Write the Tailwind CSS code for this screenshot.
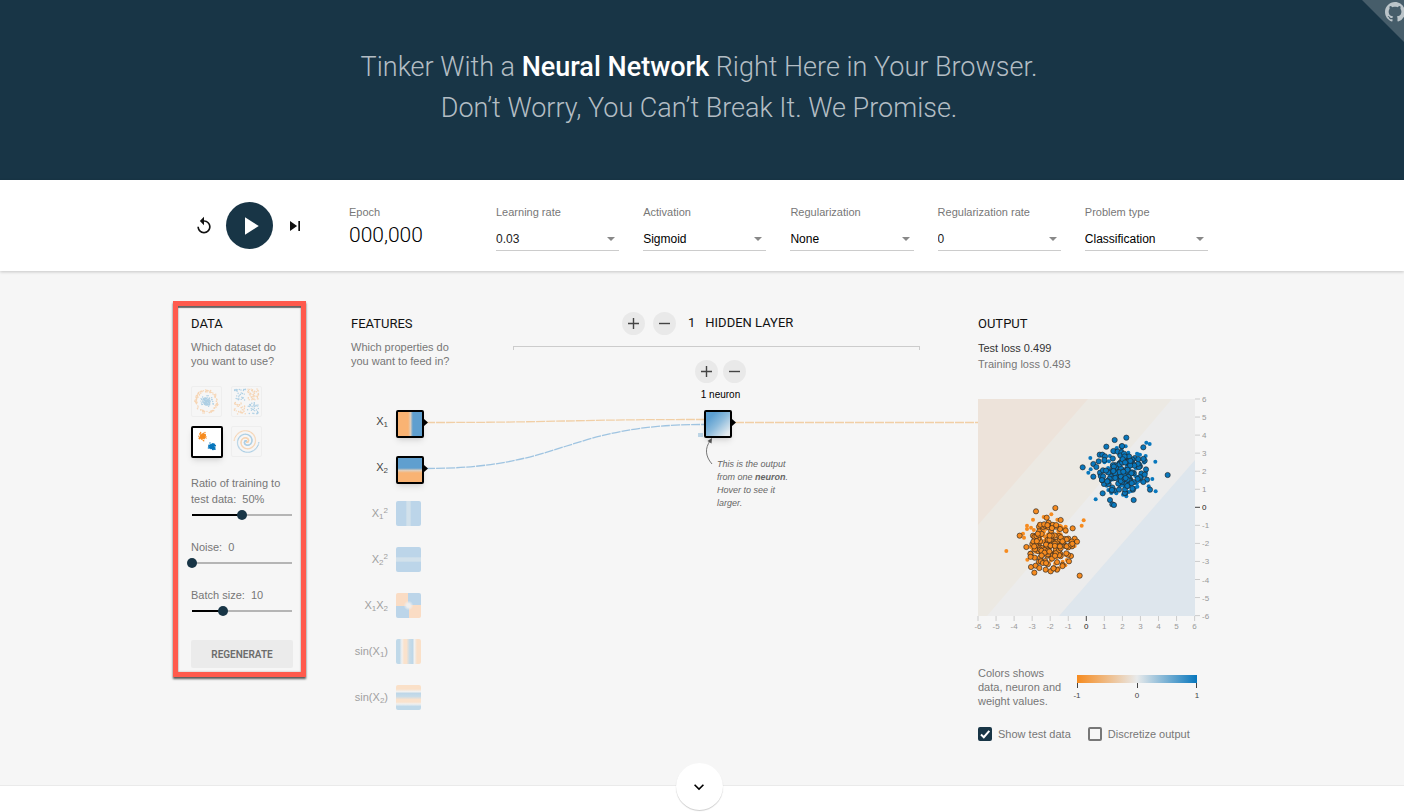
<!DOCTYPE html>
<html lang="en">
<head>
<meta charset="utf-8">
<meta name="viewport" content="width=device-width, initial-scale=1">
<title>A Neural Network Playground</title>
<script src="https://cdn.jsdelivr.net/npm/@tailwindcss/browser@4"></script>
</head>
<body class="flex min-h-screen flex-col overflow-x-hidden bg-white font-['Liberation_Sans',Arial,sans-serif] text-[11px] text-[#777]">

<header class="relative bg-[#183546] pt-[47px] pr-1.5 pb-[51px] text-center">
  <h1 class="font-[Roboto,sans-serif] text-[27px] leading-[41px] font-light text-[#b3bdc4]">Tinker With a <b class="font-medium text-white">Neural Network</b> Right Here in Your Browser.<br>Don’t Worry, You Can’t Break It. We Promise.</h1>
  <a href="#" aria-label="Source on GitHub" class="absolute top-0 right-0 block">
    <svg class="block" width="42" height="42" viewBox="0 0 42 42">
      <path d="M0 0H42V42Z" fill="#465d6a"/>
      <path transform="translate(23 2) scale(1.25)" fill="#bcc5ca" d="M8 0C3.58 0 0 3.58 0 8c0 3.54 2.29 6.53 5.47 7.59.4.07.55-.17.55-.38 0-.19-.01-.82-.01-1.49-2.01.37-2.53-.49-2.69-.94-.09-.23-.48-.94-.82-1.13-.28-.15-.68-.52-.01-.53.63-.01 1.08.58 1.23.82.72 1.21 1.87.87 2.33.66.07-.52.28-.87.51-1.07-1.78-.2-3.64-.89-3.64-3.95 0-.87.31-1.59.82-2.15-.08-.2-.36-1.02.08-2.12 0 0 .67-.21 2.2.82.64-.18 1.32-.27 2-.27.68 0 1.36.09 2 .27 1.53-1.04 2.2-.82 2.2-.82.44 1.1.16 1.92.08 2.12.51.56.82 1.27.82 2.15 0 3.07-1.87 3.75-3.65 3.95.29.25.54.73.54 1.48 0 1.07-.01 1.93-.01 2.2 0 .21.15.46.55.38A8.012 8.012 0 0 0 16 8c0-4.42-3.58-8-8-8z"/>
    </svg>
  </a>
</header>

<section aria-label="Controls" class="relative z-10 bg-white pr-1.5 shadow-[0_1px_3px_rgba(0,0,0,0.2)]">
  <div class="mx-auto flex h-[91px] max-w-[1018px] items-start">
    <div class="flex w-[159px] items-center gap-3 self-center pl-1">
      <button aria-label="Reset" class="block"><svg class="block" width="20" height="20" viewBox="0 0 24 24" fill="#111"><path d="M12 5V1L7 6l5 5V7c3.31 0 6 2.69 6 6s-2.69 6-6 6-6-2.69-6-6H4c0 4.42 3.58 8 8 8s8-3.58 8-8-3.58-8-8-8z"/></svg></button>
      <button aria-label="Play" class="flex size-[47px] items-center justify-center rounded-full bg-[#183546]"><svg width="30" height="30" viewBox="0 0 24 24" fill="#fff"><path d="M8 5v14l11-7z"/></svg></button>
      <button aria-label="Step" class="block"><svg class="block" width="20" height="20" viewBox="0 0 24 24" fill="#111"><path d="M6 18l8.5-6L6 6v12zM16 6v12h2V6h-2z"/></svg></button>
    </div>
    <div class="w-[147px] pt-[25px]">
      <div class="leading-[14px]">Epoch</div>
      <div class="mt-1 font-[Roboto,sans-serif] text-[21px] leading-6 font-light text-black">000,000</div>
    </div>
    <div class="grid flex-1 grid-cols-5 gap-6 pt-[25px]">
      <div>
        <label for="lr" class="block leading-[14px]">Learning rate</label>
        <div class="relative mt-[9px]"><select id="lr" class="block h-[23px] w-full appearance-none border-b border-[#ccc] bg-transparent text-[12px] text-[#222]"><option>0.03</option><option>0.1</option></select><svg class="pointer-events-none absolute top-[9px] right-1" width="8" height="4" viewBox="0 0 8 4" fill="#888"><path d="M0 0H8L4 4Z"/></svg></div>
      </div>
      <div>
        <label for="act" class="block leading-[14px]">Activation</label>
        <div class="relative mt-[9px]"><select id="act" class="block h-[23px] w-full appearance-none border-b border-[#ccc] bg-transparent text-[12px] text-black"><option>Sigmoid</option><option>Tanh</option></select><svg class="pointer-events-none absolute top-[9px] right-1" width="8" height="4" viewBox="0 0 8 4" fill="#888"><path d="M0 0H8L4 4Z"/></svg></div>
      </div>
      <div>
        <label for="reg" class="block leading-[14px]">Regularization</label>
        <div class="relative mt-[9px]"><select id="reg" class="block h-[23px] w-full appearance-none border-b border-[#ccc] bg-transparent text-[12px] text-black"><option>None</option><option>L1</option></select><svg class="pointer-events-none absolute top-[9px] right-1" width="8" height="4" viewBox="0 0 8 4" fill="#888"><path d="M0 0H8L4 4Z"/></svg></div>
      </div>
      <div>
        <label for="regr" class="block leading-[14px]">Regularization rate</label>
        <div class="relative mt-[9px]"><select id="regr" class="block h-[23px] w-full appearance-none border-b border-[#ccc] bg-transparent text-[12px] text-[#222]"><option>0</option><option>0.001</option></select><svg class="pointer-events-none absolute top-[9px] right-1" width="8" height="4" viewBox="0 0 8 4" fill="#888"><path d="M0 0H8L4 4Z"/></svg></div>
      </div>
      <div>
        <label for="prob" class="block leading-[14px]">Problem type</label>
        <div class="relative mt-[9px]"><select id="prob" class="block h-[23px] w-full appearance-none border-b border-[#ccc] bg-transparent text-[12px] text-black"><option>Classification</option><option>Regression</option></select><svg class="pointer-events-none absolute top-[9px] right-1" width="8" height="4" viewBox="0 0 8 4" fill="#888"><path d="M0 0H8L4 4Z"/></svg></div>
      </div>
    </div>
  </div>
</section>

<main class="border-b border-[#eaeaea] bg-[#f6f6f6] pt-[45px] pr-1.5 pb-[43px]">
  <div class="relative mx-auto grid max-w-[1018px] grid-cols-[103px_104px_1fr_230px] items-start gap-x-[58px]">

    <section class="relative pl-px">
      <div class="pointer-events-none absolute -top-[15px] -right-[13px] -bottom-[9px] -left-[17px] border-5 border-[#ff5a4d] shadow-[0_2px_2px_rgba(0,0,0,0.65),inset_0_2px_1px_rgba(0,0,0,0.55),inset_0_0_2px_rgba(0,0,0,0.3)]"></div>
      <h2 class="font-[Roboto,sans-serif] text-[13px] leading-4 text-[#111]">DATA</h2>
      <p class="mt-2 leading-[14px] whitespace-nowrap">Which dataset do<br>you want to use?</p>
      <div class="mt-[18px] grid w-[71px] grid-cols-2 gap-[9px]">
        <button aria-label="Circle" class="size-[31px] rounded-xs border border-[#ddd] opacity-30"><svg id="d-circle" class="block" width="29" height="29" viewBox="0 0 29 29"></svg></button>
        <button aria-label="Exclusive or" class="size-[31px] rounded-xs border border-[#ddd] opacity-30"><svg id="d-xor" class="block" width="29" height="29" viewBox="0 0 29 29"></svg></button>
        <button aria-label="Gaussian" aria-pressed="true" class="size-[32px] rounded-xs border-2 border-black bg-white shadow-md"><svg id="d-gauss" class="block" width="28" height="28" viewBox="0 0 28 28"></svg></button>
        <button aria-label="Spiral" class="size-[31px] rounded-xs border border-[#ddd] opacity-30"><svg id="d-spiral" class="block" width="29" height="29" viewBox="0 0 29 29"></svg></button>
      </div>
      <label for="ratio" class="mt-[17px] block leading-4 whitespace-nowrap">Ratio of training to<br>test data:&nbsp; 50%</label>
      <div class="-mx-1"><input id="ratio" type="range" min="0" max="100" value="50" style="background-image:linear-gradient(90deg,transparent 5px,#000 5px,#000 50%,#b5b5b5 50%,#b5b5b5 calc(100% - 5px),transparent calc(100% - 5px))" class="block h-4 w-full appearance-none bg-[length:100%_2px] bg-center bg-no-repeat [&::-webkit-slider-thumb]:size-[10px] [&::-webkit-slider-thumb]:appearance-none [&::-webkit-slider-thumb]:rounded-full [&::-webkit-slider-thumb]:bg-[#183546]"></div>
      <label for="noise" class="mt-4 block leading-4">Noise:&nbsp; 0</label>
      <div class="-mx-1"><input id="noise" type="range" min="0" max="50" value="0" style="background-image:linear-gradient(90deg,transparent 5px,#b5b5b5 5px,#b5b5b5 calc(100% - 5px),transparent calc(100% - 5px))" class="block h-4 w-full appearance-none bg-[length:100%_2px] bg-center bg-no-repeat [&::-webkit-slider-thumb]:size-[10px] [&::-webkit-slider-thumb]:appearance-none [&::-webkit-slider-thumb]:rounded-full [&::-webkit-slider-thumb]:bg-[#183546]"></div>
      <label for="batch" class="mt-4 block leading-4">Batch size:&nbsp; 10</label>
      <div class="-mx-1"><input id="batch" type="range" min="1" max="30" value="10" style="background-image:linear-gradient(90deg,transparent 5px,#000 5px,#000 33%,#b5b5b5 33%,#b5b5b5 calc(100% - 5px),transparent calc(100% - 5px))" class="block h-4 w-full appearance-none bg-[length:100%_2px] bg-center bg-no-repeat [&::-webkit-slider-thumb]:size-[10px] [&::-webkit-slider-thumb]:appearance-none [&::-webkit-slider-thumb]:rounded-full [&::-webkit-slider-thumb]:bg-[#183546]"></div>
      <button class="mt-[21px] block h-7 w-full rounded-xs bg-[#ebebeb] font-[Roboto,sans-serif] text-[10px] font-semibold text-[#6c6c6c]">REGENERATE</button>
    </section>

    <section>
      <h2 class="font-[Roboto,sans-serif] text-[13px] leading-4 text-[#111]">FEATURES</h2>
      <p class="mt-2 leading-[14px] whitespace-nowrap">Which properties do<br>you want to feed in?</p>
      <ul id="features" class="mt-[41px]">
        <li class="flex h-[46px] gap-2"><span class="w-[37px] pt-1 text-right text-[11px] leading-4 text-[#444]">X<sub class="text-[8px]">1</sub></span><button aria-label="X1" class="mt-px size-7 rounded-xs border-2 border-black bg-[linear-gradient(90deg,#f9b373_42%,#e0cdb9_52%,#5f9fcf_62%)] shadow-md"></button></li>
        <li class="flex h-[46px] gap-2"><span class="w-[37px] pt-1 text-right text-[11px] leading-4 text-[#444]">X<sub class="text-[8px]">2</sub></span><button aria-label="X2" class="mt-px size-7 rounded-xs border-2 border-black bg-[linear-gradient(180deg,#5f9fcf_42%,#e0cdb9_52%,#f9b373_62%)] shadow-md"></button></li>
        <li class="flex h-[46px] gap-2"><span class="w-[37px] pt-1 text-right text-[11px] leading-4 text-[#a0a0a0]">X<sub class="text-[8px]">1</sub><sup class="text-[8px]">2</sup></span><button aria-label="X1 squared" class="size-[25px] rounded-xs bg-[linear-gradient(90deg,#bcd5e9_38%,#d2e1eb_44%,#d2e1eb_56%,#bcd5e9_62%)]"></button></li>
        <li class="flex h-[46px] gap-2"><span class="w-[37px] pt-1 text-right text-[11px] leading-4 text-[#a0a0a0]">X<sub class="text-[8px]">2</sub><sup class="text-[8px]">2</sup></span><button aria-label="X2 squared" class="size-[25px] rounded-xs bg-[linear-gradient(180deg,#bcd5e9_38%,#d2e1eb_44%,#d2e1eb_56%,#bcd5e9_62%)]"></button></li>
        <li class="flex h-[46px] gap-2"><span class="w-[37px] pt-1 text-right text-[11px] leading-4 text-[#a0a0a0]">X<sub class="text-[8px]">1</sub>X<sub class="text-[8px]">2</sub></span><button aria-label="X1 times X2" class="size-[25px] overflow-hidden rounded-xs bg-[radial-gradient(circle,#eeeeee_10%,transparent_28%),conic-gradient(#bcd5e9_0_25%,#fadcc4_25%_50%,#bcd5e9_50%_75%,#fadcc4_75%)]"></button></li>
        <li class="flex h-[46px] gap-2"><span class="w-[37px] pt-1 text-right text-[11px] leading-4 whitespace-nowrap text-[#a0a0a0]">sin(X<sub class="text-[8px]">1</sub>)</span><button aria-label="sin X1" class="size-[25px] rounded-xs bg-[linear-gradient(90deg,#c0d9e9_0%,#c0d9e9_14%,#f1f1f0_24%,#fae2cc_32%,#fae2cc_42%,#c8dce8_54%,#bed7e8_66%,#f1f1f0_74%,#fae0c8_84%,#fae0c8_100%)]"></button></li>
        <li class="flex h-[46px] gap-2"><span class="w-[37px] pt-1 text-right text-[11px] leading-4 whitespace-nowrap text-[#a0a0a0]">sin(X<sub class="text-[8px]">2</sub>)</span><button aria-label="sin X2" class="size-[25px] rounded-xs bg-[linear-gradient(0deg,#c0d9e9_0%,#c0d9e9_14%,#f1f1f0_24%,#fae2cc_32%,#fae2cc_42%,#c8dce8_54%,#bed7e8_66%,#f1f1f0_74%,#fae0c8_84%,#fae0c8_100%)]"></button></li>
      </ul>
    </section>

    <section class="relative z-10">
      <div class="-mt-[5px] ml-[109px] flex h-6 items-center font-[Roboto,sans-serif] text-[13px] text-[#111]">
        <button aria-label="Add layer" class="flex size-[23px] items-center justify-center rounded-full bg-[#e9e9e9]"><svg width="11" height="11" viewBox="0 0 11 11" stroke="#444" stroke-width="1.4"><path d="M0 5.500H11M5.500 0V11"/></svg></button>
        <button aria-label="Remove layer" class="ml-2 flex size-[23px] items-center justify-center rounded-full bg-[#e9e9e9]"><svg width="11" height="11" viewBox="0 0 11 11" stroke="#444" stroke-width="1.4"><path d="M0 5.500H11"/></svg></button>
        <span class="ml-3">1</span><h2 class="ml-[10px]">HIDDEN LAYER</h2>
      </div>
      <div class="mt-[11px] h-1 border-x border-t border-[#ccc]"></div>
      <div class="mt-[10px] ml-[182px] w-[51px]">
        <div class="flex justify-between">
          <button aria-label="Add neuron" class="flex size-[23px] items-center justify-center rounded-full bg-[#e9e9e9]"><svg width="11" height="11" viewBox="0 0 11 11" stroke="#444" stroke-width="1.4"><path d="M0 5.500H11M5.500 0V11"/></svg></button>
          <button aria-label="Remove neuron" class="flex size-[23px] items-center justify-center rounded-full bg-[#e9e9e9]"><svg width="11" height="11" viewBox="0 0 11 11" stroke="#444" stroke-width="1.4"><path d="M0 5.500H11"/></svg></button>
        </div>
        <div class="mt-[5px] text-center text-[10px] leading-[14px] whitespace-nowrap text-black">1 neuron</div>
        <button aria-label="Neuron" class="mt-2 ml-[9px] block size-7 rounded-xs border-2 border-black bg-[linear-gradient(135deg,#5c9fd1_20%,#8cbbdc_50%,#e4ebef_90%)] shadow-md"></button>
        <p class="mt-5 ml-[22px] text-[9px] leading-[13px] whitespace-nowrap text-[#666] italic">This is the output<br>from one <b>neuron</b>.<br>Hover to see it<br>larger.</p>
      </div>
    </section>

    <section>
      <h2 class="font-[Roboto,sans-serif] text-[13px] leading-4 text-[#111]">OUTPUT</h2>
      <div class="mt-2 leading-4 text-[#333]">Test loss 0.499</div>
      <div class="leading-4">Training loss 0.493</div>
      <svg id="plot" class="mt-[27px] block overflow-visible" width="230" height="236" viewBox="0 0 230 236">
        <rect width="217" height="217" fill="#ececec"/>
        <path d="M0 0H194L9 217H0Z" fill="#ece9e3"/>
        <path d="M0 0H110L0 126Z" fill="#ede3da"/>
        <path d="M217 61V217H81Z" fill="#dee6ed"/>
      </svg>
      <div class="mt-[31px] flex gap-4">
        <p class="w-[83px] leading-[14px] whitespace-nowrap">Colors shows<br>data, neuron and<br>weight values.</p>
        <div class="w-[120px] pt-[9px]">
          <div class="h-2 bg-[linear-gradient(90deg,#f68b1f,#e8eaeb_50%,#0877bd)]"></div>
          <div class="flex h-[5px] justify-between"><i class="w-px bg-[#444]"></i><i class="w-px bg-[#444]"></i><i class="w-px bg-[#444]"></i></div>
          <div class="-mx-1 mt-[3px] flex justify-between text-[8px] leading-[10px] text-[#444]"><span class="w-2 text-center">-1</span><span class="w-2 text-center">0</span><span class="w-2 text-center">1</span></div>
        </div>
      </div>
      <div class="mt-[18px] flex h-4 items-center whitespace-nowrap">
        <label class="flex items-center gap-[6px]"><span class="relative block size-[14px]"><input type="checkbox" checked class="block size-[14px] appearance-none rounded-xs border-2 border-[#666] checked:border-[#183546] checked:bg-[#183546]"><svg class="pointer-events-none absolute inset-0" width="14" height="14" viewBox="0 0 14 14" fill="none" stroke="#fff" stroke-width="2"><path d="M3 7.500L5.800 10.200L11.300 3.800"/></svg></span>Show test data</label>
        <label class="ml-[17px] flex items-center gap-[6px]"><input type="checkbox" class="block size-[14px] appearance-none rounded-xs border-2 border-[#777] checked:bg-[#183546]">Discretize output</label>
      </div>
    </section>

    <!-- Weights between the nodes; the origin is the top left corner of the grid -->
    <svg class="pointer-events-none absolute top-0 left-0 overflow-visible" width="1018" height="430" fill="none">
      <g stroke-width="1.300" stroke-dasharray="9 1">
        <path d="M236 106.500C375 106.500 375 103.500 514 103.500" stroke="#f1cfa6"/>
        <path d="M236 152.500C375 152.500 375 108.500 514 108.500" stroke="#9fc4e1"/>
        <path d="M545 106.500H788" stroke="#f1cfa6"/>
      </g>
      <path d="M234 103L238 106.500L234 110ZM234 149L238 152.500L234 156ZM542 103L546 106.500L542 110Z" fill="#000"/>
      <rect x="508" y="117" width="5" height="4" fill="#bcd5e6"/>
      <path d="M522 148C515 140 515 132 520 125" stroke="#777"/>
      <path d="M522 122L521.500 127.500L517.500 125Z" fill="#555"/>
    </svg>
  </div>
</main>

<footer class="relative flex-1 bg-white pr-1.5">
  <button aria-label="Scroll down" class="relative z-10 mx-auto -mt-[23px] flex size-[47px] items-center justify-center rounded-full bg-white shadow-[0_1px_1px_rgba(0,0,0,0.2)]"><svg width="20" height="20" viewBox="0 0 24 24" fill="#000"><path d="M7.410 8.590L12 13.170l4.590-4.580L18 10l-6 6-6-6z"/></svg></button>
</footer>

<script>
const NS = 'http://www.w3.org/2000/svg', ORANGE = '#f68b1f', BLUE = '#0877bd';
let seed = 7;
const rnd = () => (seed = (seed * 16807) % 2147483647) / 2147483647;
const gauss = () => Math.sqrt(-2 * Math.log(rnd() + 1e-9)) * Math.cos(6.2832 * rnd());
function add(parent, tag, attrs, text) {
  const el = document.createElementNS(NS, tag);
  for (const k in attrs) el.setAttribute(k, attrs[k]);
  if (text !== undefined) el.textContent = text;
  document.getElementById(parent).appendChild(el);
}
const dot = (id, x, y, r, fill, line) => add(id, 'circle', line
  ? {cx: x, cy: y, r: r, fill: fill, stroke: '#222', 'stroke-opacity': 0.7, 'stroke-width': 0.9}
  : {cx: x, cy: y, r: r, fill: fill});

// Axis ticks
for (let i = -6; i <= 6; i++) {
  const p = (i + 6) * 18.05, c = i === 0 ? '#222' : '#999', l = i === 0 ? '#444' : '#ccc';
  add('plot', 'path', {d: `M${p} 217V222`, stroke: l});
  add('plot', 'path', {d: `M217 ${216.6 - p}H222`, stroke: l});
  add('plot', 'text', {x: p, y: 230, 'font-size': 8, 'text-anchor': 'middle', fill: c}, i);
  add('plot', 'text', {x: 224, y: 219.6 - p, 'font-size': 8, fill: c}, i);
}

// Samples, in thirds of a pixel
const sets = [
  {c: ORANGE, mid: [216, 440], test: [[85,456],[317,364],[311,380],[165,362],[147,380],[159,386],[220,346],[148,482],[263,383],[265,398],[238,362],[262,499],[138,416],[135,404],[197,354],[290,441],[147,390],[255,389]],
   train: [[174,337],[232,327],[125,410],[284,388],[248,363],[206,356],[212,371],[305,530],[169,521],[159,504],[173,500],[184,507],[203,512],[218,517],[237,512],[145,444],[271,419],[290,419],[297,428],[273,487],[279,471],[282,442],[246,390],[183,383],[196,384],[234,383],[165,410],[163,435],[158,464],[170,476]]},
  {c: BLUE, mid: [436, 213], test: [[337,177],[331,221],[338,211],[353,301],[505,131],[515,135],[532,188],[523,240],[533,277],[512,262],[486,167],[503,171],[400,282],[415,283],[443,142],[387,243],[391,273],[435,287],[445,292],[450,182]],
   train: [[410,123],[445,116],[496,145],[314,205],[346,195],[346,233],[355,204],[569,228],[374,283],[378,255],[396,303],[403,316],[408,318],[467,303],[516,272],[507,242],[496,249],[442,282],[465,272],[385,143],[431,142],[365,167],[373,167],[381,172],[362,187],[366,221],[392,255],[406,156],[500,185],[486,202],[483,196]]}
];
for (const s of sets) {
  const near = (sd, lim) => {
    let a, b;
    do { a = gauss() * sd; b = gauss() * sd; } while (Math.hypot(a, b) > lim);
    return [s.mid[0] + a, s.mid[1] + b];
  };
  const test = s.test.slice(), train = s.train.slice();
  for (let i = 0; i < 90; i++) test.push(near(40, 75));
  for (let i = 0; i < 110; i++) train.push(near(38, 72));
  test.forEach(p => dot('plot', p[0] / 3, p[1] / 3, 2, s.c));
  train.forEach(p => dot('plot', p[0] / 3, p[1] / 3, 2.6, s.c, true));
}

// Dataset thumbnails
for (let i = 0; i < 110; i++) {
  const a = rnd() * 6.283, r = 9.5 + rnd() * 2.5;
  dot('d-circle', 14.5 + r * Math.cos(a), 14.5 + r * Math.sin(a), 0.7, ORANGE);
  dot('d-circle', 14.5 + gauss() * 2.4, 14.5 + gauss() * 2.4, 0.7, BLUE);
}
for (let i = 0; i < 190; i++) {
  const x = 2 + rnd() * 25, y = 2 + rnd() * 25;
  if (Math.abs(x - 14.5) > 1 && Math.abs(y - 14.5) > 1) dot('d-xor', x, y, 0.7, (x > 14.5) === (y > 14.5) ? BLUE : ORANGE);
}
// The exclusive-or picture puts blue in the top left and bottom right quarters
for (let i = 0; i < 90; i++) {
  dot('d-gauss', 9.500 + gauss() * 1.6, 8.500 + gauss() * 1.5, 0.7, ORANGE);
  dot('d-gauss', 19 + gauss() * 1.6, 18.500 + gauss() * 1.5, 0.7, BLUE);
}
for (let i = 4; i < 100; i++) {
  const r = i / 100 * 12.5, t = i / 100 * 11;
  dot('d-spiral', 14.5 + r * Math.sin(t), 14.5 + r * Math.cos(t), 0.7, ORANGE);
  dot('d-spiral', 14.5 - r * Math.sin(t), 14.5 - r * Math.cos(t), 0.7, BLUE);
}
</script>
</body>
</html>
